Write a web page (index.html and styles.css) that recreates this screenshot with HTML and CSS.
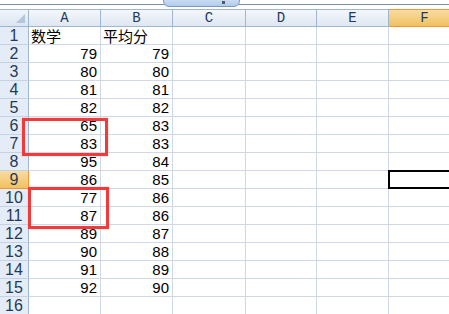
FILE: index.html
```html
<!DOCTYPE html>
<html lang="zh-CN">
<head>
    <meta charset="UTF-8">
    <title>成绩表</title>
    <link rel="stylesheet" href="styles.css">
</head>
<body>
    <div class="topbar">
        <div class="tab"><span class="tab-mark"></span></div>
    </div>

    <div class="sheet">
        <div class="grid" id="grid">
            <div class="corner"><span class="corner-tri"></span></div>
            <div class="colhead">A</div>
            <div class="colhead">B</div>
            <div class="colhead">C</div>
            <div class="colhead">D</div>
            <div class="colhead">E</div>
            <div class="colhead active">F</div>
        </div>

        <!-- annotations -->
        <div class="mark mark-1"></div>
        <div class="mark mark-2"></div>
        <div class="selected"></div>
    </div>

    <script>
        // rows: [数学, 平均分]
        var rows = [
            ['数学', '平均分'],
            [79, 79], [80, 80], [81, 81], [82, 82], [65, 83], [83, 83],
            [95, 84], [86, 85], [77, 86], [87, 86], [89, 87], [90, 88],
            [91, 89], [92, 90], ['', '']
        ];
        var grid = document.getElementById('grid');
        rows.forEach(function(r, i) {
            var n = i + 1;
            var head = document.createElement('div');
            head.className = 'rowhead' + (n === 9 ? ' active' : '');
            head.textContent = n;
            grid.appendChild(head);
            for (var c = 0; c < 6; c++) {
                var cell = document.createElement('div');
                var v = c < 2 ? r[c] : '';
                cell.className = 'cell' + (typeof v === 'number' ? ' num' : ' txt');
                cell.textContent = v;
                grid.appendChild(cell);
            }
        });
    </script>
</body>
</html>
```

FILE: styles.css
```css
body {
    margin: 0;
    background: #fff;
    font-family: "Liberation Sans", "Noto Sans CJK SC", sans-serif;
    overflow: hidden;
}

.topbar {
    position: relative;
    height: 9px;
    background: #fff;
}

.topbar::after {
    content: "";
    position: absolute;
    left: 0;
    right: 0;
    top: 4px;
    height: 1px;
    background: #7d93ab;
}

.tab {
    position: absolute;
    left: 163px;
    top: -4px;
    width: 75px;
    height: 9px;
    background: linear-gradient(#d3e3f6, #b3cbeb);
    border: 1px solid #7b99c4;
    border-radius: 0 0 6px 6px;
    z-index: 1;
}

.tab-mark {
    position: absolute;
    left: 58px;
    top: 4px;
    width: 3px;
    height: 3px;
    background: #505a66;
}

.sheet {
    position: relative;
}

.grid {
    display: grid;
    grid-template-columns: 29px 72px 72px 73px 71px 72px 72px;
    grid-auto-rows: 18px;
}

.corner,
.colhead,
.rowhead,
.cell {
    box-sizing: border-box;
}

.corner {
    position: relative;
    background: linear-gradient(#f1f5fb, #dbe5f1);
    border-top: 1px solid #9eb6ce;
    border-right: 1px solid #9eb6ce;
    border-bottom: 1px solid #9eb6ce;
}

.corner-tri {
    position: absolute;
    right: 3px;
    bottom: 3px;
    width: 0;
    height: 0;
    border-left: 9px solid transparent;
    border-bottom: 9px solid #b4c6dc;
}

.colhead {
    background: linear-gradient(#f4f7fb, #dfe7f2);
    border-top: 1px solid #9eb6ce;
    border-right: 1px solid #9eb6ce;
    border-bottom: 1px solid #9eb6ce;
    text-align: center;
    font-family: "Liberation Mono", monospace;
    font-size: 14px;
    line-height: 17px;
    color: #1f3a5a;
}

.rowhead {
    background: #e4ecf7;
    border-right: 1px solid #9eb6ce;
    border-bottom: 1px solid #c5d2e3;
    text-align: center;
    font-size: 16px;
    line-height: 18px;
    color: #1f3a5a;
}

.colhead.active,
.rowhead.active {
    background: linear-gradient(#f9dca3, #f1c15f);
    border-color: #f29536;
}

.cell {
    border-right: 1px solid #d0d7e5;
    border-bottom: 1px solid #d0d7e5;
    font-size: 15px;
    line-height: 18px;
    color: #000;
    white-space: nowrap;
    overflow: visible;
}

.cell.num {
    text-align: right;
    padding-right: 3px;
}

.cell.txt {
    padding-left: 2px;
    font-family: "Noto Sans CJK SC", sans-serif;
    font-size: 15px;
    line-height: 17px;
}

.mark {
    position: absolute;
    border: 3px solid #f23a3a;
    box-shadow: 0 0 1px #f58a8a;
}

.mark-1 {
    left: 22px;
    top: 109px;
    width: 80px;
    height: 32px;
}

.mark-2 {
    left: 28px;
    top: 178px;
    width: 75px;
    height: 36px;
}

.selected {
    position: absolute;
    left: 388px;
    top: 161px;
    width: 70px;
    height: 15px;
    border: 2px solid #000;
}
```
